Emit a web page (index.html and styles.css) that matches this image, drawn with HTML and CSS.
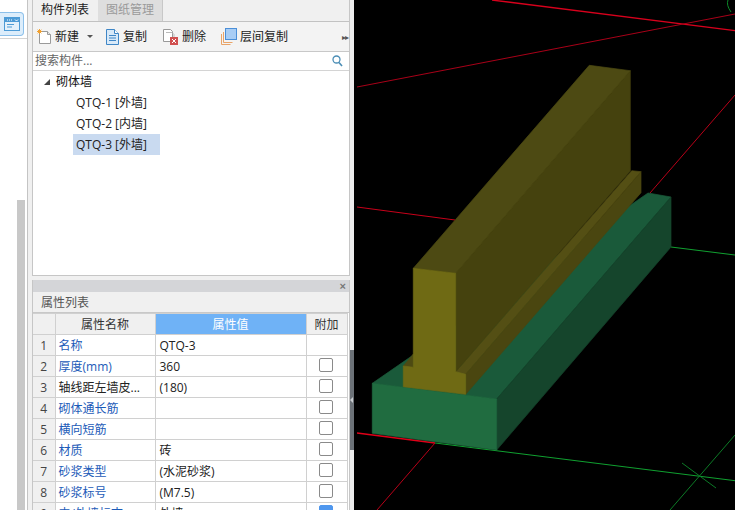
FILE: index.html
```html
<!DOCTYPE html>
<html lang="zh">
<head>
<meta charset="utf-8">
<title>构件列表</title>
<link rel="stylesheet" href="styles.css">
</head>
<body>
<div class="app">
  <aside class="rail">
    <div class="rail-top">
      <div class="rail-btn">
        <svg width="16" height="14" viewBox="0 0 16 14"><rect x="0.5" y="0.5" width="15" height="13" fill="#e4f1fb" stroke="#4d9bd6"/><rect x="1" y="1" width="14" height="4" fill="#4d9bd6"/><path d="M3 3h1M5 3h1M7 3h1M11 2.500l1.500 1.500 1.500-1.500" stroke="#fff" fill="none"/><path d="M3 7.500h7M3 10h5" stroke="#4d9bd6"/></svg>
      </div>
    </div>
    <div class="rail-scroll"><div class="rail-thumb"></div></div>
  </aside>

  <main class="side">
    <section class="list-panel">
      <div class="tabs">
        <div class="tab active">构件列表</div>
        <div class="tab">图纸管理</div>
      </div>
      <div class="toolbar">
        <div class="tool tool-new">
          <svg width="17" height="17" viewBox="0 0 17 17"><path d="M3.500 3.500h8l3 3v9h-11z" fill="#fff" stroke="#9a9a9a"/><path d="M11.500 3.500v3h3" fill="#e8e8e8" stroke="#9a9a9a"/><path d="M3.500 1v5M1 3.500h5M1.700 1.700l3.600 3.600M5.300 1.700L1.700 5.300" stroke="#f0a030"/></svg>
          <span>新建</span><i class="caret"></i>
        </div>
        <div class="tool tool-copy">
          <svg width="13" height="16" viewBox="0 0 13 16"><path d="M.5.500h8l4 4v11H.5z" fill="#d8e9f8" stroke="#3f86c6"/><path d="M8.500.500v4h4" fill="#fff" stroke="#3f86c6"/><path d="M3 6.500h7M3 9h7M3 11.500h7" stroke="#3f86c6"/></svg>
          <span>复制</span>
        </div>
        <div class="tool tool-del">
          <svg width="15" height="16" viewBox="0 0 15 16"><path d="M.5.500h7l2 2v10H.5z" fill="#fff" stroke="#999"/><path d="M3 3.500h6l2 2v4" fill="none" stroke="#bbb"/><rect x="7" y="8" width="8" height="8" fill="#d05050"/><path d="M9 10l4 4M13 10l-4 4" stroke="#fff"/></svg>
          <span>删除</span>
        </div>
        <div class="tool tool-floor">
          <svg width="16" height="17" viewBox="0 0 16 17"><path d="M.5 6v10.500h9" fill="none" stroke="#e9a468"/><path d="M2.500 4v10.500h9" fill="none" stroke="#e9a468"/><rect x="4.500" y=".5" width="11" height="11" fill="#a8cdf5" stroke="#4b8fd8"/></svg>
          <span>层间复制</span>
        </div>
        <span class="more">▸▸</span>
      </div>
      <div class="search">
        <span class="search-text">搜索构件...</span>
        <svg width="11" height="12" viewBox="0 0 11 12"><circle cx="4.500" cy="4.500" r="3.500" fill="none" stroke="#4a8db5" stroke-width="1.300"/><path d="M7 7.500l3 3.500" stroke="#4a8db5" stroke-width="1.600"/></svg>
      </div>
      <div class="tree">
        <div class="tree-root"><i class="tri"></i><span>砌体墙</span></div>
        <div class="tree-item">QTQ-1 [外墙]</div>
        <div class="tree-item">QTQ-2 [内墙]</div>
        <div class="tree-item selected">QTQ-3 [外墙]</div>
      </div>
    </section>

    <section class="prop-panel">
      <div class="prop-bar"><span class="close">×</span></div>
      <div class="prop-title">属性列表</div>
      <table class="props">
        <colgroup><col class="c-i"><col class="c-n"><col class="c-v"><col class="c-a"></colgroup>
        <thead>
          <tr><th></th><th>属性名称</th><th class="hl">属性值</th><th>附加</th></tr>
        </thead>
        <tbody>
          <tr><td class="idx">1</td><td class="name link">名称</td><td class="val">QTQ-3</td><td></td></tr>
          <tr><td class="idx">2</td><td class="name link">厚度(mm)</td><td class="val">360</td><td class="chk"><i class="box"></i></td></tr>
          <tr><td class="idx">3</td><td class="name">轴线距左墙皮...</td><td class="val">(180)</td><td class="chk"><i class="box"></i></td></tr>
          <tr><td class="idx">4</td><td class="name link">砌体通长筋</td><td class="val"></td><td class="chk"><i class="box"></i></td></tr>
          <tr><td class="idx">5</td><td class="name link">横向短筋</td><td class="val"></td><td class="chk"><i class="box"></i></td></tr>
          <tr><td class="idx">6</td><td class="name link">材质</td><td class="val">砖</td><td class="chk"><i class="box"></i></td></tr>
          <tr><td class="idx">7</td><td class="name link">砂浆类型</td><td class="val">(水泥砂浆)</td><td class="chk"><i class="box"></i></td></tr>
          <tr><td class="idx">8</td><td class="name link">砂浆标号</td><td class="val">(M7.5)</td><td class="chk"><i class="box"></i></td></tr>
          <tr><td class="idx">9</td><td class="name link">内/外墙标志</td><td class="val">外墙</td><td class="chk"><i class="box on"></i></td></tr>
        </tbody>
      </table>
    </section>
  </main>

  <div class="splitter"><div class="handle"><i></i></div></div>

  <div class="view">
    <svg width="381" height="510" viewBox="354 0 381 510">
      <g fill="none">
        <path d="M492 0L735 30.700" stroke="#d8001c" stroke-width="1.300"/>
        <path d="M357 87L735 14" stroke="#a80018"/>
        <path d="M357 207L455 220" stroke="#c8001a"/>
        <path d="M650 193L735 95" stroke="#b80018"/>
        <path d="M357 433L435 443" stroke="#e00018" stroke-width="1.300"/>
        <path d="M435 443L377 510" stroke="#b80018"/>
        <path d="M435 443L735 480.700" stroke="#10a030"/>
        <path d="M671 247L735 255" stroke="#10a030"/>
        <path d="M735 435L670 510" stroke="#0c7a26"/>
        <path d="M682 463L716 488" stroke="#0c7a26"/>
        <path d="M728 0q-2 5 3 12" stroke="#0c8a28"/>
      </g>
      <polygon class="f-base-top" points="372.300,383.300 496.700,399 671,197 648,193"/>
      <polygon class="f-base-side" points="496.700,399 671,197 671,247 496.700,450"/>
      <polygon class="f-base-front" points="372.300,383.300 496.700,399 496.700,450 372.300,433.300"/>
      <polygon class="f-top" points="403.300,366 413.300,354 413.300,368"/>
      <polygon class="f-foot-top" points="455.700,371.700 465.700,374.300 641,171.700 631.700,170.700"/>
      <polygon class="f-foot-side" points="465.700,374.300 641,171.700 641,192.700 465.700,394.300"/>
      <polygon class="f-side" points="455.700,273.300 630.300,70.700 630.300,171 455.700,371.700"/>
      <polygon class="f-top" points="413.300,268.300 455.700,273.300 630.300,70.700 589.300,65.300"/>
      <polygon class="f-front" points="413.300,268.300 455.700,273.300 455.700,371.700 465.700,374.300 465.700,394.300 403.300,386.700 403.300,366 413.300,367.300"/>
    </svg>
  </div>
</div>
</body>
</html>
```

FILE: styles.css
```css
* { box-sizing: border-box; }
html, body { margin: 0; height: 100%; }
body {
  background: #000;
  overflow: hidden;
  font: 12px/1 "Open Sans", "Noto Sans CJK SC", sans-serif;
  color: #1a1a1a;
}
.app { display: flex; width: 735px; height: 510px; overflow: hidden; }

/* left rail */
.rail {
  width: 28px;
  flex: none;
  background: #fff;
  border-right: 1px solid #c4c4c4;
  display: flex;
  flex-direction: column;
}
.rail-top {
  height: 39px;
  flex: none;
  border-bottom: 1px solid #d4d4d4;
  padding-top: 12px;
}
.rail-btn {
  width: 24px;
  height: 24px;
  background: #dcedfb;
  border: 1px solid #8cc0ea;
  border-left: 0;
  border-radius: 0 4px 4px 0;
  display: flex;
  align-items: center;
  justify-content: center;
}
.rail-scroll { flex: 1; padding: 161px 2px 0 17px; }
.rail-thumb { width: 8px; height: 100%; background: #c8c8c8; }

/* middle column */
.side {
  width: 322px;
  flex: none;
  background: #f0f0f0;
  padding-left: 4px;
  display: flex;
  flex-direction: column;
  gap: 4px;
}
.list-panel {
  height: 276px;
  flex: none;
  display: flex;
  flex-direction: column;
  border: 1px solid #c6c6c6;
  border-top: 0;
  background: #fff;
}
.tabs {
  height: 22px;
  flex: none;
  display: flex;
  background: #f0f0f0;
  border-bottom: 1px solid #c2c2c2;
}
.tab {
  width: 65px;
  padding-top: 4px;
  text-align: center;
  color: #9a9a9a;
  background: #dedede;
  border-right: 1px solid #c8c8c8;
}
.tab.active { width: 65px; padding-right: 1px; color: #222; background: #f0f0f0; border-right: 0; }
.toolbar {
  height: 30px;
  flex: none;
  display: flex;
  align-items: center;
  background: #f3f3f3;
  border-bottom: 1px solid #c8c8c8;
  padding-left: 3px;
  position: relative;
}
.tool { display: flex; align-items: center; color: #222; }
.tool-new { width: 70px; gap: 2px; }
.tool-copy { width: 57px; gap: 4px; }
.tool-del { width: 58px; gap: 4px; }
.tool-floor { gap: 3px; }
.caret {
  margin-left: 6px;
  border: 3px solid transparent;
  border-top: 3px solid #555;
  border-bottom: 0;
  width: 0;
}
.more { margin-left: auto; padding-right: 1px; font-size: 8px; letter-spacing: -1px; color: #555; }
.search {
  height: 19px;
  flex: none;
  display: flex;
  align-items: center;
  justify-content: space-between;
  padding: 0 6px 0 2px;
  border-bottom: 1px solid #d4d4d4;
  background: #fff;
}
.search-text { color: #666; }
.tree { flex: 1; padding-top: 1px; background: #fff; }
.tree-root {
  height: 20px;
  display: flex;
  align-items: center;
  padding-left: 11px;
  gap: 6px;
  color: #111;
}
.tri {
  width: 0;
  height: 0;
  border-left: 6px solid transparent;
  border-bottom: 6px solid #444;
}
.tree-item {
  width: 87px;
  height: 21px;
  margin-left: 40px;
  padding-left: 3px;
  line-height: 21px;
  white-space: nowrap;
  color: #222;
}
.tree-item.selected { background: #c9daf0; }

/* property panel */
.prop-panel {
  flex: 1;
  min-height: 0;
  overflow: hidden;
  background: #fff;
  border-right: 1px solid #c6c6c6;
  border-left: 1px solid #c6c6c6;
}
.prop-bar {
  height: 12px;
  background: #d4d5d8;
  display: flex;
  justify-content: flex-end;
  align-items: center;
  padding-right: 3px;
}
.close { font: bold 11px/12px "Liberation Sans", sans-serif; color: #777; }
.prop-title {
  height: 21px;
  padding: 5px 0 0 8px;
  background: #f0f0f0;
  color: #555;
  border-bottom: 1px solid #c8c8c8;
}
.props {
  width: 314px;
  table-layout: fixed;
  border-collapse: collapse;
}
.c-i { width: 22px; }
.c-n { width: 100px; }
.c-v { width: 151px; }
.c-a { width: 41px; }
.props th, .props td {
  height: 21px;
  padding: 1px 0 0;
  border: 1px solid #d0d0d0;
  font-weight: 400;
  white-space: nowrap;
  overflow: hidden;
}
.props tr > :first-child { border-left: 0; }
.props th { background: #f0f0f0; color: #333; text-align: center; padding-top: 2px; }
.props th.hl { background: #6fb2f6; color: #fff; }
.props .idx { background: #f0f0f0; color: #444; text-align: center; }
.props .name { padding-left: 3px; color: #222; }
.props .name.link { color: #1c5bb8; }
.props .val { padding-left: 4px; color: #222; }
.props .chk { text-align: center; line-height: 0; padding: 0; }
.box {
  display: inline-block;
  width: 14px;
  height: 14px;
  border: 1px solid #8a8a8a;
  border-radius: 2px;
  background: #fff;
  position: relative;
  top: -1px;
  left: -1px;
}
.box.on { background: #4f97ee; border-color: #4f97ee; }

/* splitter */
.splitter {
  width: 4px;
  flex: none;
  background: #ededed;
  display: flex;
  align-items: flex-start;
  padding-top: 350px;
}
.handle {
  width: 4px;
  height: 100px;
  background: #6c7278;
  display: flex;
  align-items: center;
}
.handle i {
  border: 3px solid transparent;
  border-right: 3px solid #c8ccd0;
  border-left: 0;
  width: 0;
}

/* 3D viewport */
.view { flex: 1; min-width: 0; background: #000; overflow: hidden; }
.view svg { display: block; }
.view polygon { stroke-width: 0.7; stroke-linejoin: round; }
.f-base-top { fill: #1a5a3a; stroke: #1a5a3a; }
.f-base-side { fill: #15452c; stroke: #15452c; }
.f-base-front { fill: #206c40; stroke: #206c40; }
.f-foot-top { fill: #544f14; stroke: #544f14; }
.f-foot-side { fill: #4a4610; stroke: #4a4610; }
.f-top { fill: #4d4a13; stroke: #4d4a13; }
.f-side { fill: #45420e; stroke: #45420e; }
.f-front { fill: #6f6a14; stroke: #6f6a14; }
```
